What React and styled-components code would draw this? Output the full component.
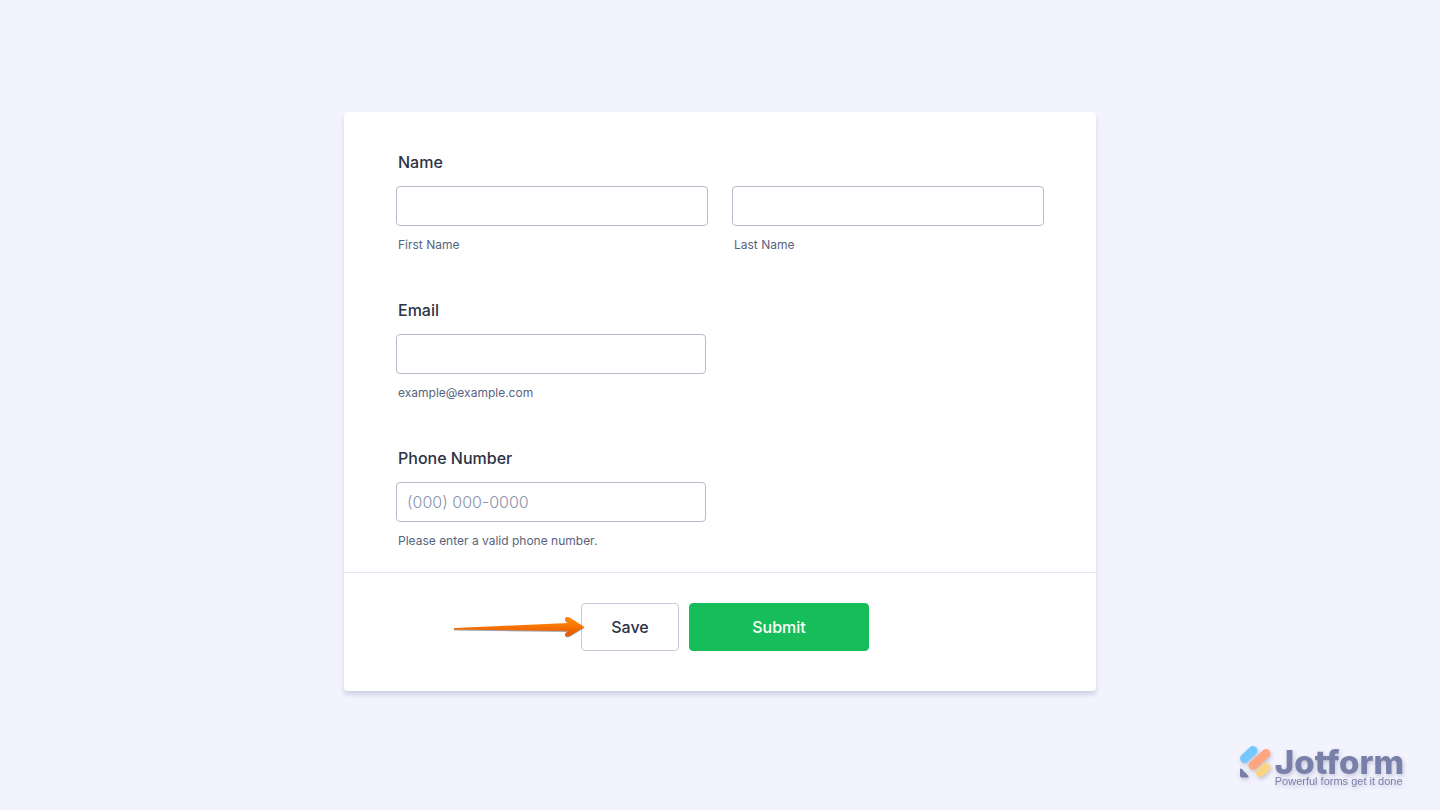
import React from "react"
import styled, { createGlobalStyle } from "styled-components"

const GlobalStyle = createGlobalStyle`
  * {
    box-sizing: border-box;
  }
  body {
    margin: 0;
    background: #f3f3fe;
    font-family: Inter, "Liberation Sans", sans-serif;
    color: #2c3345;
  }
`

const Page = styled.div`
  position: relative;
  min-height: 100vh;
  padding: 112px 24px;
`

const Form = styled.form`
  max-width: 752px;
  margin: 0 auto;
  background: #fff;
  border-radius: 4px;
  box-shadow: 0 4px 4px rgba(87, 100, 126, 0.21);
`

const Questions = styled.div`
  display: flex;
  flex-direction: column;
  gap: 43px;
  padding: 38px 52px 21px;
`

const Question = styled.fieldset`
  min-width: 0;
  margin: 0;
  padding: 0;
  border: 0;
`

const Title = styled.legend`
  margin-bottom: 12px;
  padding: 0 2px;
  font-size: 16px;
  font-weight: 500;
  line-height: 24px;
`

const Columns = styled.div`
  display: grid;
  grid-template-columns: 1fr 1fr;
  gap: 24px;
`

const Field = styled.div`
  display: flex;
  flex-direction: column;
  max-width: ${props => (props.$narrow ? "310px" : "none")};
`

const Input = styled.input`
  width: 100%;
  height: 40px;
  padding: 0 10px;
  border: 1px solid #b9b9cb;
  border-radius: 4px;
  background: #fff;
  color: #2c3345;
  font-family: inherit;
  font-size: 16px;
  &::placeholder {
    color: #8894ab;
    font-weight: 300;
    opacity: 1;
  }
`

const SubLabel = styled.label`
  margin-top: 9px;
  padding: 0 2px;
  color: #57647e;
  font-size: 12px;
  line-height: 20px;
`

const Actions = styled.div`
  display: flex;
  justify-content: center;
  padding: 30px 52px 40px;
  border-top: 1px solid #e3e5f2;
`

const Action = styled.div`
  position: relative;
  margin-left: 10px;
`

const Button = styled.button`
  min-width: ${props => (props.$primary ? "180px" : "98px")};
  height: 48px;
  border: 1px solid ${props => (props.$primary ? "#18bd5b" : "#c3cad8")};
  border-radius: 4px;
  background: ${props => (props.$primary ? "#18bd5b" : "#fff")};
  color: ${props => (props.$primary ? "#fff" : "#2c3345")};
  font-family: inherit;
  font-size: 16px;
  font-weight: 500;
  cursor: pointer;
`

const Pointer = styled.svg`
  position: absolute;
  top: 13px;
  right: 94px;
  overflow: visible;
  filter: drop-shadow(0 1px 0 rgba(70, 80, 100, 0.5));
`

const Brand = styled.div`
  position: absolute;
  right: 36px;
  bottom: 23px;
  display: flex;
  align-items: flex-end;
  color: #787fa9;
  filter: drop-shadow(1px 2px 2px rgba(80, 85, 120, 0.3));
`

const BrandText = styled.div`
  display: flex;
  flex-direction: column;
`

const BrandName = styled.span`
  font-size: 33px;
  font-weight: 800;
  line-height: 26px;
`

const Tagline = styled.span`
  font-family: "Liberation Sans", Arial, sans-serif;
  font-size: 11px;
  line-height: 12px;
`

const Arrow = () => (
  <Pointer width="131" height="22" viewBox="0 0 131 22" aria-hidden="true">
    <defs>
      <linearGradient id="arrow" x1="0" y1="0" x2="0" y2="1">
        <stop offset="0.3" stopColor="#ff8005" />
        <stop offset="0.8" stopColor="#ea6000" />
      </linearGradient>
    </defs>
    <path
      d="M0 12 L114 7 L111.500 4.500 Q110.500 2.500 112 1.300 Q113.500 0.500 115.500 1.500 L130.500 11 L115.500 20 Q113 21 111.500 19.800 Q110.500 18.500 111.500 17 L114 15 L0 13.500 Z"
      fill="url(#arrow)"
    />
  </Pointer>
)

const Logo = () => (
  <svg width="35" height="41" viewBox="0 0 35 41" aria-hidden="true">
    <g strokeWidth="9" strokeLinecap="round">
      <path d="M4.500 12.500 L13 4.500" stroke="#74c7ff" />
      <path d="M13 19.500 L26 7.500" stroke="#ffa680" />
      <path d="M20.500 26.500 L26 21.500" stroke="#fbd585" />
    </g>
    <path d="M0 24 Q0 21.500 2 23.300 L8 29.500 Q9.500 31.500 7 31.500 H2 Q0 31.500 0 29.500 Z" fill="#787fa9" />
  </svg>
)

const App = () => (
  <Page>
    <GlobalStyle />
    <Form onSubmit={e => e.preventDefault()}>
      <Questions>
        <Question>
          <Title>Name</Title>
          <Columns>
            <Field>
              <Input id="first" type="text" autoComplete="given-name" />
              <SubLabel htmlFor="first">First Name</SubLabel>
            </Field>
            <Field>
              <Input id="last" type="text" autoComplete="family-name" />
              <SubLabel htmlFor="last">Last Name</SubLabel>
            </Field>
          </Columns>
        </Question>
        <Question>
          <Title>Email</Title>
          <Field $narrow>
            <Input id="email" type="email" />
            <SubLabel htmlFor="email">example@example.com</SubLabel>
          </Field>
        </Question>
        <Question>
          <Title>Phone Number</Title>
          <Field $narrow>
            <Input id="phone" type="tel" placeholder="(000) 000-0000" />
            <SubLabel htmlFor="phone">Please enter a valid phone number.</SubLabel>
          </Field>
        </Question>
      </Questions>
      <Actions>
        <Action>
          <Button type="button">Save</Button>
          <Arrow />
        </Action>
        <Action>
          <Button type="submit" $primary>
            Submit
          </Button>
        </Action>
      </Actions>
    </Form>
    <Brand>
      <Logo />
      <BrandText>
        <BrandName>Jotform</BrandName>
        <Tagline>Powerful forms get it done</Tagline>
      </BrandText>
    </Brand>
  </Page>
)

export default App
